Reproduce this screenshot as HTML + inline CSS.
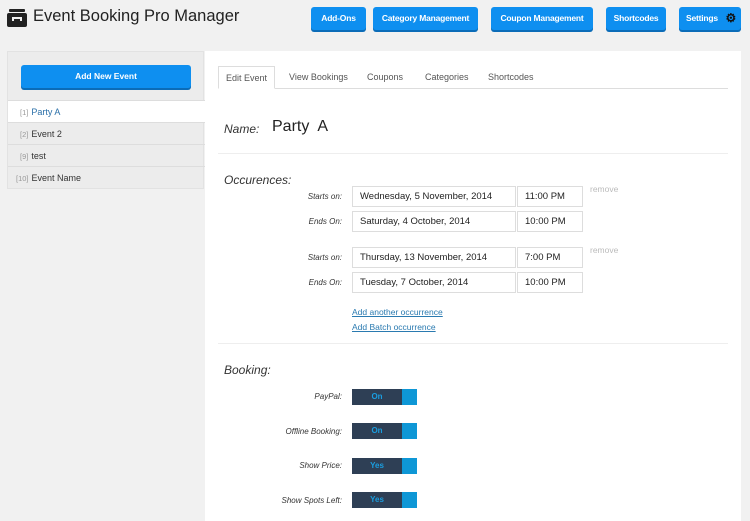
<!DOCTYPE html>
<html><head><meta charset="utf-8"><style>
*{margin:0;padding:0;box-sizing:border-box}
body{width:750px;height:513px;overflow:hidden;background:#f1f1f1;font-family:"Liberation Sans",sans-serif;position:relative;color:#333}
.a{position:absolute}
.btn{position:absolute;top:7px;height:23px;background:#0e8ff0;border-radius:3px;color:#fff;font-size:8.5px;font-weight:bold;text-align:center;line-height:23px;box-shadow:0 2px 0 #0b6cb8;letter-spacing:-0.2px}
.side{left:7px;top:51px;width:197px;height:138px;background:#ececec;border:1px solid #e2e2e2}
.item{position:absolute;left:0;width:197px;height:22px;font-size:9px;line-height:22px;border-top:1px solid #ddd;color:#333}
.item span{color:#999;font-size:7.5px;margin-right:3px}
.main{left:205px;top:51px;width:536px;height:470px;background:#fff}
.tab{position:absolute;top:66px;height:23px;font-size:9px;line-height:22px;color:#555}
.lbl{position:absolute;font-size:8px;font-style:italic;color:#333;text-align:right;width:120px}
.inp{position:absolute;height:21px;border:1px solid #ddd;font-size:9.5px;line-height:19px;padding-left:7px;color:#222}
.tg{position:absolute;left:352px;width:65px;height:16px;background:#0e97d6}
.tg div{width:50px;height:16px;background:#2e3f55;color:#1a9ee0;font-size:8px;text-align:center;line-height:16px;font-weight:bold}
.h{position:absolute;font-size:12px;font-style:italic;color:#333}
</style></head><body>
<svg class="a" style="left:7px;top:9px" width="20" height="18" viewBox="0 0 20 18"><rect x="2" y="0" width="16" height="3" rx="1" fill="#222"/><rect x="0" y="4" width="20" height="14" rx="2" fill="#222"/><rect x="5" y="8" width="10" height="2" fill="#f1f1f1"/><rect x="5" y="8" width="2" height="4" fill="#f1f1f1"/><rect x="13" y="8" width="2" height="4" fill="#f1f1f1"/></svg>
<div class="a" style="left:33px;top:7px;font-size:16.5px;color:#222">Event Booking Pro Manager</div>
<div class="btn" style="left:311px;width:55px">Add-Ons</div>
<div class="btn" style="left:373px;width:105px">Category Management</div>
<div class="btn" style="left:491px;width:102px">Coupon Management</div>
<div class="btn" style="left:606px;width:60px">Shortcodes</div>
<div class="btn" style="left:679px;width:62px;text-align:left;padding-left:7px">Settings<span style="color:#111;font-size:12px;position:absolute;right:5px;top:0">⚙</span></div>

<div class="a side">
<div class="a" style="left:13px;top:13px;width:170px;height:23px;background:#0e8ff0;border-radius:3px;box-shadow:0 2px 0 #0b6cb8;color:#fff;font-size:8.5px;font-weight:bold;text-align:center;line-height:23px">Add New Event</div>
<div class="item" style="top:48px;background:#fff;width:198px;padding-left:12px;color:#2a6fa8"><span>[1]</span>Party A</div>
<div class="item" style="top:70px;padding-left:12px"><span>[2]</span>Event 2</div>
<div class="item" style="top:92px;padding-left:12px"><span>[9]</span>test</div>
<div class="item" style="top:114px;padding-left:8px"><span>[10]</span>Event Name</div>
</div>

<div class="a main"></div>
<div class="a" style="left:218px;top:88px;width:510px;height:1px;background:#ddd"></div>
<div class="tab" style="left:218px;width:57px;border:1px solid #ddd;border-bottom:1px solid #fff;background:#fff;text-align:center">Edit Event</div>
<div class="tab" style="left:289px">View Bookings</div>
<div class="tab" style="left:367px">Coupons</div>
<div class="tab" style="left:425px">Categories</div>
<div class="tab" style="left:488px">Shortcodes</div>

<div class="h" style="left:224px;top:122px">Name:</div>
<div class="a" style="left:272px;top:118px;font-size:16px;color:#222">Party&nbsp; A</div>
<div class="a" style="left:218px;top:153px;width:510px;height:1px;background:#eee"></div>

<div class="h" style="left:224px;top:173px">Occurences:</div>
<div class="lbl" style="left:222px;top:192px">Starts on:</div>
<div class="inp" style="left:352px;top:186px;width:164px">Wednesday, 5 November, 2014</div>
<div class="inp" style="left:517px;top:186px;width:66px">11:00 PM</div>
<div class="a" style="left:590px;top:184px;font-size:8.5px;color:#bbb">remove</div>
<div class="lbl" style="left:222px;top:217px">Ends On:</div>
<div class="inp" style="left:352px;top:211px;width:164px">Saturday, 4 October, 2014</div>
<div class="inp" style="left:517px;top:211px;width:66px">10:00 PM</div>

<div class="lbl" style="left:222px;top:253px">Starts on:</div>
<div class="inp" style="left:352px;top:247px;width:164px">Thursday, 13 November, 2014</div>
<div class="inp" style="left:517px;top:247px;width:66px">7:00 PM</div>
<div class="a" style="left:590px;top:245px;font-size:8.5px;color:#bbb">remove</div>
<div class="lbl" style="left:222px;top:278px">Ends On:</div>
<div class="inp" style="left:352px;top:272px;width:164px">Tuesday, 7 October, 2014</div>
<div class="inp" style="left:517px;top:272px;width:66px">10:00 PM</div>

<div class="a" style="left:352px;top:307px;font-size:8.5px;color:#2a7ab0;text-decoration:underline">Add another occurrence</div>
<div class="a" style="left:352px;top:322px;font-size:8.5px;color:#2a7ab0;text-decoration:underline">Add Batch occurrence</div>
<div class="a" style="left:218px;top:343px;width:510px;height:1px;background:#eee"></div>

<div class="h" style="left:224px;top:363px">Booking:</div>
<div class="lbl" style="left:222px;top:392px">PayPal:</div>
<div class="tg" style="top:389px"><div>On</div></div>
<div class="lbl" style="left:222px;top:427px">Offline Booking:</div>
<div class="tg" style="top:423px"><div>On</div></div>
<div class="lbl" style="left:222px;top:461px">Show Price:</div>
<div class="tg" style="top:458px"><div>Yes</div></div>
<div class="lbl" style="left:222px;top:496px">Show Spots Left:</div>
<div class="tg" style="top:492px"><div>Yes</div></div>
</body></html>
